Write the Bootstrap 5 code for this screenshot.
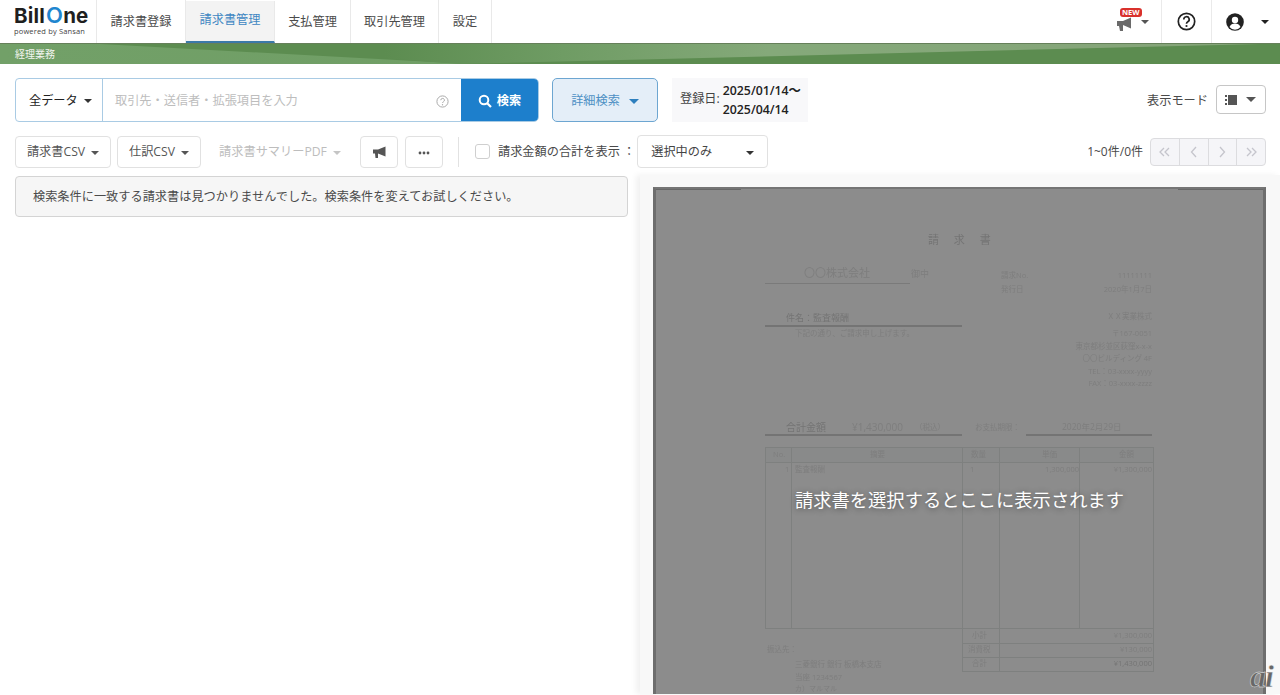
<!DOCTYPE html>
<html lang="ja"><head><meta charset="utf-8"><title>Bill One</title>
<link rel="stylesheet" href="https://cdn.jsdelivr.net/npm/bootstrap@5.3.0/dist/css/bootstrap.min.css">
<style>
html,body{height:695px;overflow:hidden}
body{font-family:"Open Sans","Noto Sans CJK JP",sans-serif;font-size:12.2px;color:#4a4a4a;background:#fff}
.topbar{height:43px}
.brand-box{width:97px;border-right:1px solid #e9e9e9;padding:6px 0 0 14px;line-height:1}
.brand-name{font:700 20.500px/19px "Inter",sans-serif;color:#1f1f1f;letter-spacing:.2px;white-space:nowrap}
.brand-o{color:#1f86cf;font-size:22px;font-weight:600;margin-left:1px}
.brand-sub{font:400 7.500px/8px "Open Sans",sans-serif;color:#444;margin-top:2px;letter-spacing:.15px}
.tab-item{border-right:1px solid #e9e9e9;color:#4b4b4b;display:flex;align-items:center;justify-content:center;height:43px;padding-top:2px}
.tab-active{background:#f3f3f3;color:#3f87c2;border-bottom:2px solid #3b79a8;padding:0 0 1px;margin-top:1px;height:42px}
.w89{width:89px}.w76{width:76px}.w88{width:88px}.w53{width:53px}
.util-cell{height:43px;border-left:1px solid #eaeaea}
.caret-d{display:inline-block;width:0;height:0;border-left:4px solid transparent;border-right:4px solid transparent;border-top:4px solid #555}
.band{height:21px;background:#5c8c50;border-top:1px solid #66805a;font-size:10px;line-height:21px;color:#f2f5f0;padding-left:15px;position:relative;overflow:hidden}
.band::before{content:"";position:absolute;inset:0;background:linear-gradient(90deg,#72a068,#6c9c61);clip-path:polygon(0 0,100px 0,470px 100%,0 100%)}
.band::after{content:"";position:absolute;inset:0;background:linear-gradient(90deg,#5c8c50 30%,#6f9c64 44%,#85a97a 60%,#85a579 90%);clip-path:polygon(200px 0,1260px 0,460px 100%)}
.band-label{position:relative;z-index:1}
.searchrow{height:43px;margin:14px 14px 0 15px}
.search-group{width:524px;height:44px;border:1px solid #a9cbe4;border-radius:4px 5px 5px 4px;overflow:hidden}
.scope{width:87px;color:#222;border-right:1px solid #a9cbe4;padding:3px 0 0 13px;gap:6px}
.q-input{flex:1;color:#bdbdbd;padding:3px 12px 0;gap:4px}
.q-btn{width:77px;background:#1d7fcc;color:#fff;font-weight:700;gap:5px;padding-top:3px}
.adv-btn{width:106px;height:44px;margin-left:13px;background:#e4eef8;border:1px solid #6da6d1;border-radius:5px;color:#4d90c4;gap:9px;padding-top:3px}
.caret-b{border-top-color:#2d7fbe;border-left-width:5px;border-right-width:5px;border-top-width:5px}
.date-box{margin-left:14px;height:44px;width:136px;background:#f8f8fa;padding:0 0 0 8px;color:#444}
.date-val{color:#222;line-height:19px;font-weight:600;font-size:12.300px;margin-left:3px}
.mode-label{padding-top:3px}
.mode-btn{width:50px;height:29px;border:1px solid #c6c6c6;border-radius:4px;background:#fff;gap:9px;margin-left:8px;padding-right:2px}
.toolrow{height:33px;margin:14px 14px 0 15px}
.tool-btn{height:32px;border:1px solid #e1e1e1;border-radius:4px;background:#fff;color:#555;gap:6px;padding:2px 0 0}
.tool-off{color:#bdbdbd;border-color:transparent}
.tool-off .caret-d{border-top-color:#c5c5c5}
.w-csv1{width:96px;justify-content:center}
.w-csv2{width:84px;justify-content:center;margin-left:6px}
.w-pdf{width:136px;justify-content:center;margin-left:6px;padding-left:10px}
.w-icon{width:38px;justify-content:center;margin-left:7px}
.w-first{margin-left:17px}
.vsep{width:1px;height:30px;background:#e2e2e2;margin:0 16px 0 15px}
.chk{width:15px;height:15px;border:1px solid #cfcfcf;border-radius:3px;background:#fff;margin-right:8px}
.chk-label{padding-top:2px}
.sel-box{width:131px;height:33px;border:1px solid #e1e1e1;border-radius:4px;padding:2px 13px 0;color:#444;margin-left:2px}
.page-count{font-size:12px}
.pager{border:1px solid #dcdcdf;border-radius:4px;background:#f5f5f8;height:28px;width:116px;margin-left:7px}
.pager span{flex:1;border-right:1px solid #dcdcdf;height:100%}
.pager span:last-child{border-right:0}
.content-row{height:519px;margin-top:7px}
.left-pane{width:640px;padding:1px 12px 0 15px}
.empty-msg{height:41px;background:#f6f6f6;border:1px solid #d4d4d4;border-radius:4px;padding:2px 17px 0;color:#4a4a4a}
.right-pane{width:640px;background:#f8f8f8;box-shadow:-4px 0 6px rgba(0,0,0,.06);padding:12px 14px 0 13px}
.viewer{position:relative;height:507px;background:#8c8c8c;overflow:hidden;border-left:3px solid #6e6e6e;border-right:3px solid #6e6e6e;border-top:2px solid #757575}
.viewer-tl,.viewer-tr{position:absolute;top:0;height:1px;width:85px;background:#686868}
.viewer-tl{left:0}.viewer-tr{right:0}
.doc{position:absolute;left:0;top:0;width:607px;height:505px;filter:blur(.7px)}
.dt{position:absolute;white-space:nowrap;color:#7e7e7e;font-size:7.500px;line-height:10px}
.dk{color:#747474}
.dl{position:absolute;height:1px;background:#7a7a7a}
.dl2{height:2px;background:#747474}
.inv-table{position:absolute;left:109px;top:258px;width:389px;height:182px;border:1px solid #7e807f;border-collapse:collapse;table-layout:fixed}
.inv-table td{border-left:1px solid #7e807f;padding:0}
.inv-table .hd td{height:15px;background:#898a8a;border-bottom:1px solid #7e807f}
.inv-sum{position:absolute;left:306px;top:440px;width:192px;border-collapse:collapse;table-layout:fixed;border-right:1px solid #7e807f;border-left:1px solid #7e807f}
.inv-sum td{height:14px;border-bottom:1px solid #7e807f;padding:0}
.inv-sum td:first-child{width:37px;border-right:1px solid #7e807f}
.msg{position:absolute;left:0;right:0;top:299px;text-align:center;color:#fff;font-size:18.300px;line-height:24px;text-shadow:0 1px 6px rgba(0,0,0,.45)}
.ai-mark{position:absolute;right:7px;top:663px;font:italic 700 32px/26px "Liberation Serif",serif;color:#686868;-webkit-text-stroke:.4px #f2f2f2;letter-spacing:-1px}
</style></head><body>

<nav class="topbar d-flex">
  <div class="brand-box">
    <div class="brand-name">Bill<span class="brand-o">O</span>ne</div>
    <div class="brand-sub">powered by Sansan</div>
  </div>
  <div class="tab-item w89">請求書登録</div>
  <div class="tab-item tab-active w89">請求書管理</div>
  <div class="tab-item w76">支払管理</div>
  <div class="tab-item w88">取引先管理</div>
  <div class="tab-item w53">設定</div>
  <div class="ms-auto d-flex">
    <div class="d-flex align-items-center position-relative" style="width:45px;padding-left:2px">
      <svg width="18" height="16" viewBox="0 0 18 16" style="margin-top:7px"><path d="M1 4h6l8-3.500v11L7 8v6H4L3 9H1z" fill="#6a6a6a"/></svg>
      <span class="caret-d" style="margin:1px 0 0 7px"></span>
      <span class="position-absolute" style="left:6px;top:8px;background:#d9312c;color:#fff;font:700 7.500px/9px 'Open Sans',sans-serif;border-radius:3px;padding:0 2px">NEW</span>
    </div>
    <div class="util-cell d-flex align-items-center justify-content-center" style="width:50px;margin-left:2px">
      <svg width="19" height="19" viewBox="0 0 19 19"><circle cx="9.500" cy="9.500" r="8.200" fill="none" stroke="#222" stroke-width="1.700"/><path d="M6.800 7.500a2.700 2.700 0 1 1 4 2.300c-.9.500-1.300 1-1.300 2" fill="none" stroke="#222" stroke-width="1.700"/><circle cx="9.500" cy="14" r="1.100" fill="#222"/></svg>
    </div>
    <div class="util-cell d-flex align-items-center" style="width:69px;padding-left:14px;gap:17px">
      <svg width="18" height="18" viewBox="0 0 18 18"><circle cx="9" cy="9" r="8.800" fill="#222"/><circle cx="9" cy="7" r="3.200" fill="#fff"/><path d="M3.500 14c1-2.600 3-3.600 5.500-3.600s4.500 1 5.500 3.600A7 7 0 0 1 3.500 14z" fill="#fff"/></svg>
      <span class="caret-d" style="border-top-color:#222"></span>
    </div>
  </div>
</nav>
<div class="band"><span class="band-label">経理業務</span></div>

<div class="searchrow d-flex align-items-center">
  <div class="search-group d-flex">
    <div class="scope d-flex align-items-center">全データ<span class="caret-d" style="border-top-color:#333"></span></div>
    <div class="q-input d-flex align-items-center justify-content-between">
      <span>取引先・送信者・拡張項目を入力</span>
      <svg width="13" height="13" viewBox="0 0 13 13"><circle cx="6.500" cy="6.500" r="5.600" fill="none" stroke="#aaa"/><path d="M4.800 5.200a1.800 1.800 0 1 1 2.600 1.600c-.6.300-.9.700-.9 1.200" fill="none" stroke="#aaa"/><circle cx="6.500" cy="9.700" r=".7" fill="#aaa"/></svg>
    </div>
    <div class="q-btn d-flex align-items-center justify-content-center">
      <svg width="14" height="14" viewBox="0 0 14 14"><circle cx="6" cy="6" r="4.300" fill="none" stroke="#fff" stroke-width="2"/><path d="M9.200 9.200L13 13" stroke="#fff" stroke-width="2.200"/></svg>検索
    </div>
  </div>
  <div class="adv-btn d-flex align-items-center justify-content-center">詳細検索<span class="caret-d caret-b"></span></div>
  <div class="date-box d-flex align-items-center">登録日:<div class="date-val">2025/01/14〜<br>2025/04/14</div></div>
  <div class="ms-auto d-flex align-items-center"><span class="mode-label">表示モード</span>
    <div class="mode-btn d-flex align-items-center justify-content-center">
      <svg width="12" height="10" viewBox="0 0 12 10"><path d="M0 0h2v2H0zM0 4h2v2H0zM0 8h2v2H0z" fill="#555"/><rect x="3" width="9" height="10" fill="#555"/></svg>
      <span class="caret-d" style="border-left-width:5px;border-right-width:5px;border-top-width:5px"></span>
    </div>
  </div>
</div>

<div class="toolrow d-flex align-items-center">
  <div class="tool-btn w-csv1 d-flex align-items-center">請求書CSV<span class="caret-d"></span></div>
  <div class="tool-btn w-csv2 d-flex align-items-center">仕訳CSV<span class="caret-d"></span></div>
  <div class="tool-btn tool-off w-pdf d-flex align-items-center">請求書サマリーPDF<span class="caret-d"></span></div>
  <div class="tool-btn w-icon w-first d-flex align-items-center">
    <svg width="15" height="13" viewBox="0 0 15 13"><path d="M1 3.500h5L13.500.5v10L6 7.500V12H3.500L3 7.500H1z" fill="#555"/></svg>
  </div>
  <div class="tool-btn w-icon d-flex align-items-center">
    <svg width="12" height="4" viewBox="0 0 12 4"><circle cx="2" cy="2" r="1.400" fill="#555"/><circle cx="6" cy="2" r="1.400" fill="#555"/><circle cx="10" cy="2" r="1.400" fill="#555"/></svg>
  </div>
  <div class="vsep"></div>
  <div class="chk"></div>
  <span class="chk-label">請求金額の合計を表示 ：</span>
  <div class="sel-box d-flex align-items-center justify-content-between">選択中のみ<span class="caret-d" style="border-top-color:#333"></span></div>
  <div class="ms-auto d-flex align-items-center page-count">1~0件/0件
    <div class="pager d-flex">
      <span class="d-flex align-items-center justify-content-center"><svg width="14" height="10" viewBox="0 0 14 10"><path d="M6 1L2 5l4 4M11 1L7 5l4 4" fill="none" stroke="#c5c5cc" stroke-width="1.300"/></svg></span>
      <span class="d-flex align-items-center justify-content-center"><svg width="8" height="12" viewBox="0 0 8 12"><path d="M6 1L1.500 6 6 11" fill="none" stroke="#c5c5cc" stroke-width="1.300"/></svg></span>
      <span class="d-flex align-items-center justify-content-center"><svg width="8" height="12" viewBox="0 0 8 12"><path d="M2 1l4.500 5L2 11" fill="none" stroke="#c5c5cc" stroke-width="1.300"/></svg></span>
      <span class="d-flex align-items-center justify-content-center"><svg width="14" height="10" viewBox="0 0 14 10"><path d="M3 1l4 4-4 4M8 1l4 4-4 4" fill="none" stroke="#c5c5cc" stroke-width="1.300"/></svg></span>
    </div>
  </div>
</div>

<div class="content-row d-flex">
  <div class="left-pane"><div class="empty-msg d-flex align-items-center">検索条件に一致する請求書は見つかりませんでした。検索条件を変えてお試しください。</div></div>
  <div class="right-pane">
    <div class="viewer">
      <div class="viewer-tl"></div><div class="viewer-tr"></div>
      <div class="doc">
        <span class="dt dk" style="left:272px;top:45px;font-size:11px;line-height:12px;word-spacing:12px">請 求 書</span>
        <span class="dt" style="left:148px;top:78px;font-size:11px;line-height:12px">〇〇株式会社</span><span class="dt" style="left:255px;top:80px;font-size:9px">御中</span>
        <div class="dl" style="left:109px;top:94px;width:145px"></div>
        <span class="dt" style="left:345px;top:81px">請求No.</span><span class="dt" style="right:111px;top:81px">11111111</span>
        <span class="dt" style="left:345px;top:95px">発行日</span><span class="dt" style="right:111px;top:95px">2020年1月7日</span>
        <span class="dt" style="right:111px;top:122px">ＸＸ実業株式</span>
        <span class="dt dk" style="left:130px;top:124px;font-size:9px">件名：監査報酬</span>
        <div class="dl dl2" style="left:109px;top:136px;width:197px"></div>
        <span class="dt" style="left:139px;top:139px">下記の通り、ご請求申し上げます。</span>
        <span class="dt" style="right:111px;top:139px">〒167-0051</span>
        <span class="dt" style="right:111px;top:152px">東京都杉並区荻窪x-x-x</span>
        <span class="dt" style="right:111px;top:164px">〇〇ビルディング 4F</span>
        <span class="dt" style="right:111px;top:177px">TEL：03-xxxx-yyyy</span>
        <span class="dt" style="right:111px;top:189px">FAX：03-xxxx-zzzz</span>
        <span class="dt dk" style="left:130px;top:232px;font-size:10px;line-height:12px">合計金額</span>
        <span class="dt" style="left:196px;top:232px;font-size:10px;line-height:12px">¥1,430,000</span>
        <span class="dt" style="left:259px;top:233px">（税込）</span>
        <span class="dt" style="left:319px;top:233px">お支払期限：</span>
        <span class="dt" style="left:406px;top:233px;font-size:8.500px">2020年2月29日</span>
        <div class="dl dl2" style="left:109px;top:245px;width:197px"></div>
        <div class="dl dl2" style="left:370px;top:245px;width:126px"></div>
        <table class="inv-table"><colgroup><col style="width:26px"><col style="width:171px"><col style="width:37px"><col style="width:80px"><col></colgroup>
          <tr class="hd"><td></td><td></td><td></td><td></td><td></td></tr>
          <tr><td></td><td></td><td></td><td></td><td></td></tr>
        </table>
        <span class="dt" style="left:117px;top:260px">No.</span>
        <span class="dt" style="left:214px;top:260px">摘要</span>
        <span class="dt" style="left:315px;top:260px">数量</span>
        <span class="dt" style="left:386px;top:260px">単価</span>
        <span class="dt" style="left:463px;top:260px">金額</span>
        <span class="dt" style="left:129px;top:275px">1</span>
        <span class="dt" style="left:139px;top:275px">監査報酬</span>
        <span class="dt" style="left:314px;top:275px">1</span>
        <span class="dt" style="right:184px;top:275px">1,300,000</span>
        <span class="dt" style="right:111px;top:275px">¥1,300,000</span>
        <table class="inv-sum"><tr><td></td><td></td></tr><tr><td></td><td></td></tr><tr><td></td><td></td></tr></table>
        <span class="dt" style="left:316px;top:441px">小計</span><span class="dt" style="right:111px;top:441px">¥1,300,000</span>
        <span class="dt" style="left:312px;top:455px">消費税</span><span class="dt" style="right:111px;top:455px">¥130,000</span>
        <span class="dt" style="left:316px;top:469px">合計</span><span class="dt dk" style="right:111px;top:469px">¥1,430,000</span>
        <span class="dt" style="left:111px;top:455px">振込先：</span>
        <span class="dt" style="left:139px;top:470px">三菱銀行 銀行 板橋本支店</span>
        <span class="dt" style="left:139px;top:483px">当座 1234567</span>
        <span class="dt" style="left:139px;top:495px;font-size:7px;line-height:9px">カ）マルマル</span>
      </div>
      <div class="msg">請求書を選択するとここに表示されます</div>
    </div>
  </div>
</div>
<div class="ai-mark">ai</div>
</body></html>
